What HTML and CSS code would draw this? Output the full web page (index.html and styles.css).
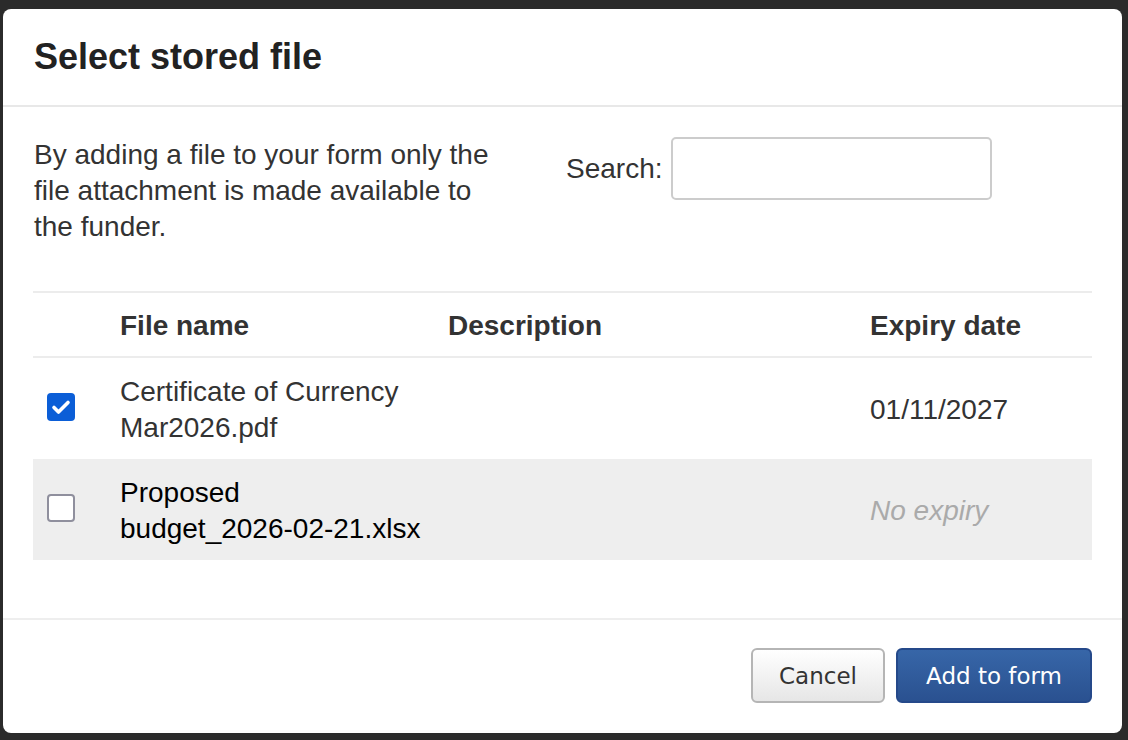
FILE: index.html
```html
<!DOCTYPE html>
<html lang="en">
<head>
    <meta charset="UTF-8">
    <meta name="viewport" content="width=device-width, initial-scale=1.0">
    <title>Select stored file</title>
    <link rel="stylesheet" href="styles.css">
</head>
<body>
    <div class="backdrop">
        <div class="modal">
            <div class="modal-header">
                <h1>Select stored file</h1>
            </div>

            <div class="modal-body">
                <div class="intro">
                    <p class="intro-text">By adding a file to your form only the file attachment is made available to the funder.</p>
                    <div class="search">
                        <label for="search">Search:</label>
                        <input type="text" id="search">
                    </div>
                </div>

                <table class="files">
                    <thead>
                        <tr>
                            <th class="col-check"></th>
                            <th class="col-name">File name</th>
                            <th class="col-desc">Description</th>
                            <th class="col-expiry">Expiry date</th>
                        </tr>
                    </thead>
                    <tbody>
                        <tr>
                            <td class="col-check">
                                <span class="checkbox checked">
                                    <svg viewBox="0 0 28 28" width="28" height="28"><path d="M7 14.5l4.5 4.5L21 9.5" fill="none" stroke="#fff" stroke-width="3.6" stroke-linecap="round" stroke-linejoin="round"/></svg>
                                </span>
                            </td>
                            <td class="col-name">Certificate of Currency Mar2026.pdf</td>
                            <td class="col-desc"></td>
                            <td class="col-expiry">01/11/2027</td>
                        </tr>
                        <tr class="row-alt">
                            <td class="col-check"><span class="checkbox"></span></td>
                            <td class="col-name">Proposed <span class="nobreak">budget_2026-02-21.xlsx</span></td>
                            <td class="col-desc"></td>
                            <td class="col-expiry"><em class="no-expiry">No expiry</em></td>
                        </tr>
                    </tbody>
                </table>
            </div>

            <div class="modal-footer">
                <button class="btn btn-default">Cancel</button>
                <button class="btn btn-primary">Add to form</button>
            </div>
        </div>
    </div>
</body>
</html>
```

FILE: styles.css
```css
* {
    box-sizing: border-box;
    margin: 0;
    padding: 0;
}

body {
    background-color: #2b2b2b;
    font-family: "Liberation Sans", Arial, sans-serif;
    font-size: 28px;
    line-height: 36px;
    color: #333;
}

.backdrop {
    padding: 9px 6px 7px 3px;
}

.modal {
    background-color: white;
    border-radius: 8px;
    height: 724px;
    display: flex;
    flex-direction: column;
}

.modal-header {
    height: 98px;
    padding: 0 31px;
    display: flex;
    align-items: center;
    border-bottom: 2px solid #e8e8e8;
}

.modal-header h1 {
    font-size: 36px;
    font-weight: bold;
    color: #222;
    line-height: 44px;
}

.modal-body {
    flex: 1;
    padding: 30px 30px 0 30px;
}

.intro {
    display: flex;
    gap: 63px;
    margin-bottom: 46px;
}

.intro-text {
    width: 470px;
    flex: 0 0 470px;
    padding-left: 1px;
}

.search {
    display: flex;
    align-items: center;
    gap: 8px;
    height: 63px;
}

.search input {
    width: 321px;
    height: 63px;
    border: 2px solid #ccc;
    border-radius: 5px;
    font-size: 28px;
    padding: 0 12px;
}

.files {
    width: 100%;
    border-collapse: collapse;
    border-top: 2px solid #ececec;
}

.files th {
    text-align: left;
    font-weight: bold;
    padding: 15px 15px 12px 15px;
    border-bottom: 2px solid #ececec;
}

.files td {
    padding: 16px 15px 13px 15px;
    vertical-align: middle;
}

.files .col-check {
    width: 72px;
    padding-left: 14px;
}

.files .col-name {
    width: 328px;
    padding-right: 10px;
}

.files .col-desc {
    width: 422px;
}

.nobreak {
    white-space: nowrap;
}

.row-alt {
    background-color: #eee;
}

.row-alt .col-name {
    color: #000;
}

.no-expiry {
    color: #aaa;
}

.checkbox {
    display: block;
    width: 28px;
    height: 28px;
    margin-top: -6px;
    border: 2px solid #8f8f9d;
    border-radius: 4px;
    background-color: white;
}

.checkbox.checked {
    border: none;
    background-color: #0b5ed7;
}

.checkbox svg {
    display: block;
}

.modal-footer {
    border-top: 2px solid #eee;
    padding: 28px 30px 30px 30px;
    display: flex;
    justify-content: flex-end;
    gap: 11px;
}

.btn {
    height: 55px;
    padding: 0 20px;
    border-radius: 6px;
    font-family: "DejaVu Sans", Tahoma, sans-serif;
    font-size: 23px;
    cursor: pointer;
}

.btn-default {
    width: 134px;
    color: #333;
    background: linear-gradient(#fff, #e6e6e6);
    border: 2px solid #b5b5b5;
}

.btn-primary {
    width: 196px;
    color: white;
    background: linear-gradient(#3766a8, #2a5190);
    border: 2px solid #25498a;
}
```
